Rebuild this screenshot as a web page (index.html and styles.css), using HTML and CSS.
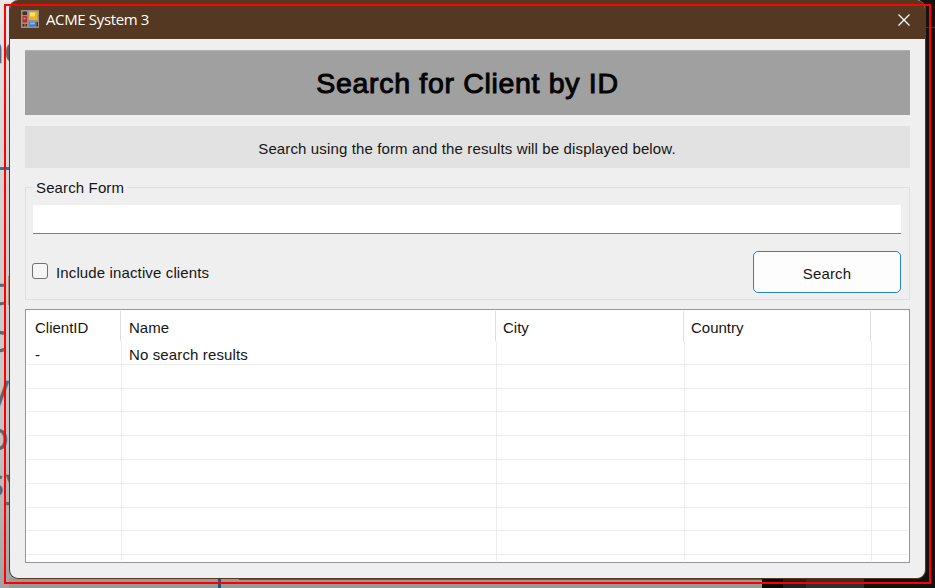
FILE: index.html
```html
<!DOCTYPE html>
<html lang="en">
<head>
<meta charset="utf-8">
<title>ACME System 3</title>
<link rel="stylesheet" href="styles.css">
</head>
<body>
<div class="backdrop" aria-hidden="true">
  <span class="scrap s1">ac</span><span class="scrap s2">tl</span><span class="scrap s3">c</span><span class="scrap s4">y</span><span class="scrap s5">o</span><span class="scrap s6">sy</span>
  <i class="link-rule"></i><i class="right-panel"></i><i class="right-rule"></i><i class="bottom-left"></i><i class="bottom-rule"></i><i class="bottom-line"></i><i class="bottom-dark"></i>
</div>
<main class="window">
  <header class="titlebar">
    <svg class="app-icon" width="18" height="18" viewBox="0 0 18 18">
      <path fill="#99918b" d="M0 0h18v18H0z"/>
      <path fill="#4a2e1b" d="M1.500 1.500h4.500v3.500H1.500zM1.500 14h2v2.500h-2zM4.500 14H6v2.500H4.500zM15.500 12h1.500v4.500h-1.500z"/>
      <path fill="#b92e2b" d="M1.500 6H6v6.500H1.500z"/><path fill="#e07b6b" d="M2.500 7.500h2v2h-2z"/>
      <path fill="#efb21b" d="M8 1.500h8.500V10H8z"/><path fill="#ffe06c" d="M9 2.500h5v4H9z"/>
      <path fill="#3478e0" d="M8 12h7v4.500H8z"/><path fill="#85b5fa" d="M9 12.500h5v2H9z"/>
    </svg>
    <span class="title">ACME System 3</span>
    <svg class="close" width="12" height="12" viewBox="0 0 12 12"><path d="M.5.5l11 11M11.500.5l-11 11" stroke="#fff" stroke-width="1.200"/></svg>
  </header>
  <div class="content">
    <h1 class="heading"><span>Search for Client by ID</span></h1>
    <p class="hint"><span>Search using the form and the results will be displayed below.</span></p>
    <fieldset class="form">
      <legend>Search Form</legend>
      <input class="query" type="text" aria-label="Client ID">
      <div class="actions">
        <label class="inactive"><input type="checkbox"><span>Include inactive clients</span></label>
        <button class="search" type="button">Search</button>
      </div>
    </fieldset>
    <div class="results">
      <div class="row head"><span>ClientID</span><span>Name</span><span>City</span><span>Country</span><span></span></div>
      <div class="body">
        <div class="row first"><span>-</span><span>No search results</span><span></span><span></span><span></span></div>
        <div class="row"><span></span><span></span><span></span><span></span><span></span></div>
        <div class="row"><span></span><span></span><span></span><span></span><span></span></div>
        <div class="row"><span></span><span></span><span></span><span></span><span></span></div>
        <div class="row"><span></span><span></span><span></span><span></span><span></span></div>
        <div class="row"><span></span><span></span><span></span><span></span><span></span></div>
        <div class="row"><span></span><span></span><span></span><span></span><span></span></div>
        <div class="row"><span></span><span></span><span></span><span></span><span></span></div>
        <div class="row"><span></span><span></span><span></span><span></span><span></span></div>
        <div class="row last"><span></span><span></span><span></span><span></span><span></span></div>
      </div>
    </div>
  </div>
</main>
<div class="frame"></div>
</body>
</html>
```
FILE: styles.css
```css
* { box-sizing: border-box; }
body {
  margin: 0;
  width: 935px;
  height: 588px;
  overflow: hidden;
  position: relative;
  font: 15px/18px "Liberation Sans", Arial, sans-serif;
  letter-spacing: .13px;
  color: #151515;
}
.backdrop {
  position: absolute;
  inset: 0;
  overflow: hidden;
  background: linear-gradient(#e8e8e8, #d4d4d4 30%, #c4c4c4 75%, #a3a3a3);
}
.backdrop i { position: absolute; }
.scrap { position: absolute; font: 38px/40px "Open Sans", sans-serif; letter-spacing: 0; color: #5d646b; -webkit-text-stroke: .5px #5d646b; }
.s1 { left: -17px; top: 28px; }
.s2 { left: -9px; top: 270px; letter-spacing: 1px; }
.s3 { left: -13px; top: 317px; }
.s4 { left: -10px; top: 367px; }
.s5 { left: -14px; top: 415px; }
.s6 { left: -14px; top: 461px; letter-spacing: 2px; }
.link-rule { left: 0; top: 167px; width: 9px; height: 3px; background: #2878a5; }
.right-panel { left: 920px; top: 0; width: 15px; height: 588px; background: #15120f; }
.right-rule { left: 926px; top: 27px; width: 9px; height: 1px; background: #373737; }
.bottom-left { left: 9px; top: 578px; width: 753px; height: 10px; background: #999; }
.bottom-rule { left: 218px; top: 579px; width: 3px; height: 9px; background: #1d5678; }
.bottom-line { left: 239px; top: 579px; width: 523px; height: 1px; background: #3f606c; }
.bottom-dark {
  left: 762px; top: 570px; width: 173px; height: 18px;
  background: linear-gradient(90deg, #0b0b0b 21px, #222 21px 44px, #303030 44px 102px, #111 102px);
}
.window {
  position: relative;
  margin-left: 9px;
  width: 917px;
  height: 579px;
  border: 1px solid #553821;
  border-top: 0;
  border-radius: 9px;
  background: #efefef;
  overflow: hidden;
}
.titlebar {
  height: 39px;
  padding: 0 15px 0 11px;
  display: flex;
  align-items: center;
  background: #553821;
  color: #fff;
}
.app-icon { margin-top: -1px; }
.title { margin: -2px 0 0 7px; font: 15px/20px "Open Sans", sans-serif; letter-spacing: -.36px; }
.close { margin-left: auto; }
.content { padding: 11px 15px 0; display: flex; flex-direction: column; }
.heading {
  margin: 0;
  height: 65px;
  display: flex;
  align-items: center;
  justify-content: center;
  background: #a0a0a0;
  border-top: 1px solid #b0b0b0;
  font-size: 28.500px;
  font-weight: 400;
  line-height: 30px;
  letter-spacing: .68px;
  -webkit-text-stroke: 1px #050505;
  color: #050505;
}
.hint {
  margin: 11px 0 0;
  height: 42px;
  padding: 3px 1px 0 0;
  display: flex;
  align-items: center;
  justify-content: center;
  background: #e2e2e2;
}
.form {
  margin: 9px 0 0;
  padding: 0 7px;
  height: 123px;
  border: 1px solid #dfdfdf;
}
.form legend { padding: 2px 3px 0; height: 20px; line-height: 18px; }
.query {
  display: block;
  margin-top: 8px;
  width: 868px;
  height: 29px;
  border: 0;
  border-bottom: 1px solid #808080;
  background: #fff;
}
.actions { display: flex; justify-content: space-between; margin-top: 17px; width: 868px; }
.inactive { display: flex; height: 40px; align-items: center; margin-left: -1px; }
.inactive input {
  appearance: none;
  margin: 0 8px 0 0;
  width: 16px;
  height: 16px;
  border: 1px solid #707070;
  border-radius: 3px;
  background: #f5f5f5;
}
.inactive span { padding-top: 3px; }
.search {
  width: 148px;
  height: 42px;
  padding: 3px 0 0;
  border: 1px solid #2585cc;
  border-radius: 5px;
  background: #fdfdfd;
  font: inherit;
  letter-spacing: inherit;
  color: inherit;
}
.results {
  margin-top: 9px;
  height: 254px;
  border: 1px solid #92959b;
  background: #fff;
  padding: 1px 1px 2px;
  overflow: hidden;
}
.row {
  display: grid;
  grid-template-columns: 95px 375px 188px 187px 1fr;
  height: 23.800px;
  border-bottom: 1px solid #ededed;
}
.row span { border-right: 1px solid #ededed; padding-left: 7px; white-space: nowrap; }
.row span:last-child { border-right: 0; }
.head { grid-template: 30px / 94px 375px 188px 187px 1fr; height: 30px; border: 0; line-height: 34px; letter-spacing: 0; }
.head span { border-right-color: #dedede; padding-left: 8px; }
.head span:nth-child(n+3) { padding-left: 7px; }
.first { grid-template-rows: 23px; line-height: 27px; }
.first span:first-child { padding-left: 8px; }
.last { height: 6px; border: 0; }
.frame {
  position: absolute;
  left: 4px;
  top: 4px;
  width: 927px;
  height: 580px;
  border: 2px solid #f00;
  pointer-events: none;
}
```
